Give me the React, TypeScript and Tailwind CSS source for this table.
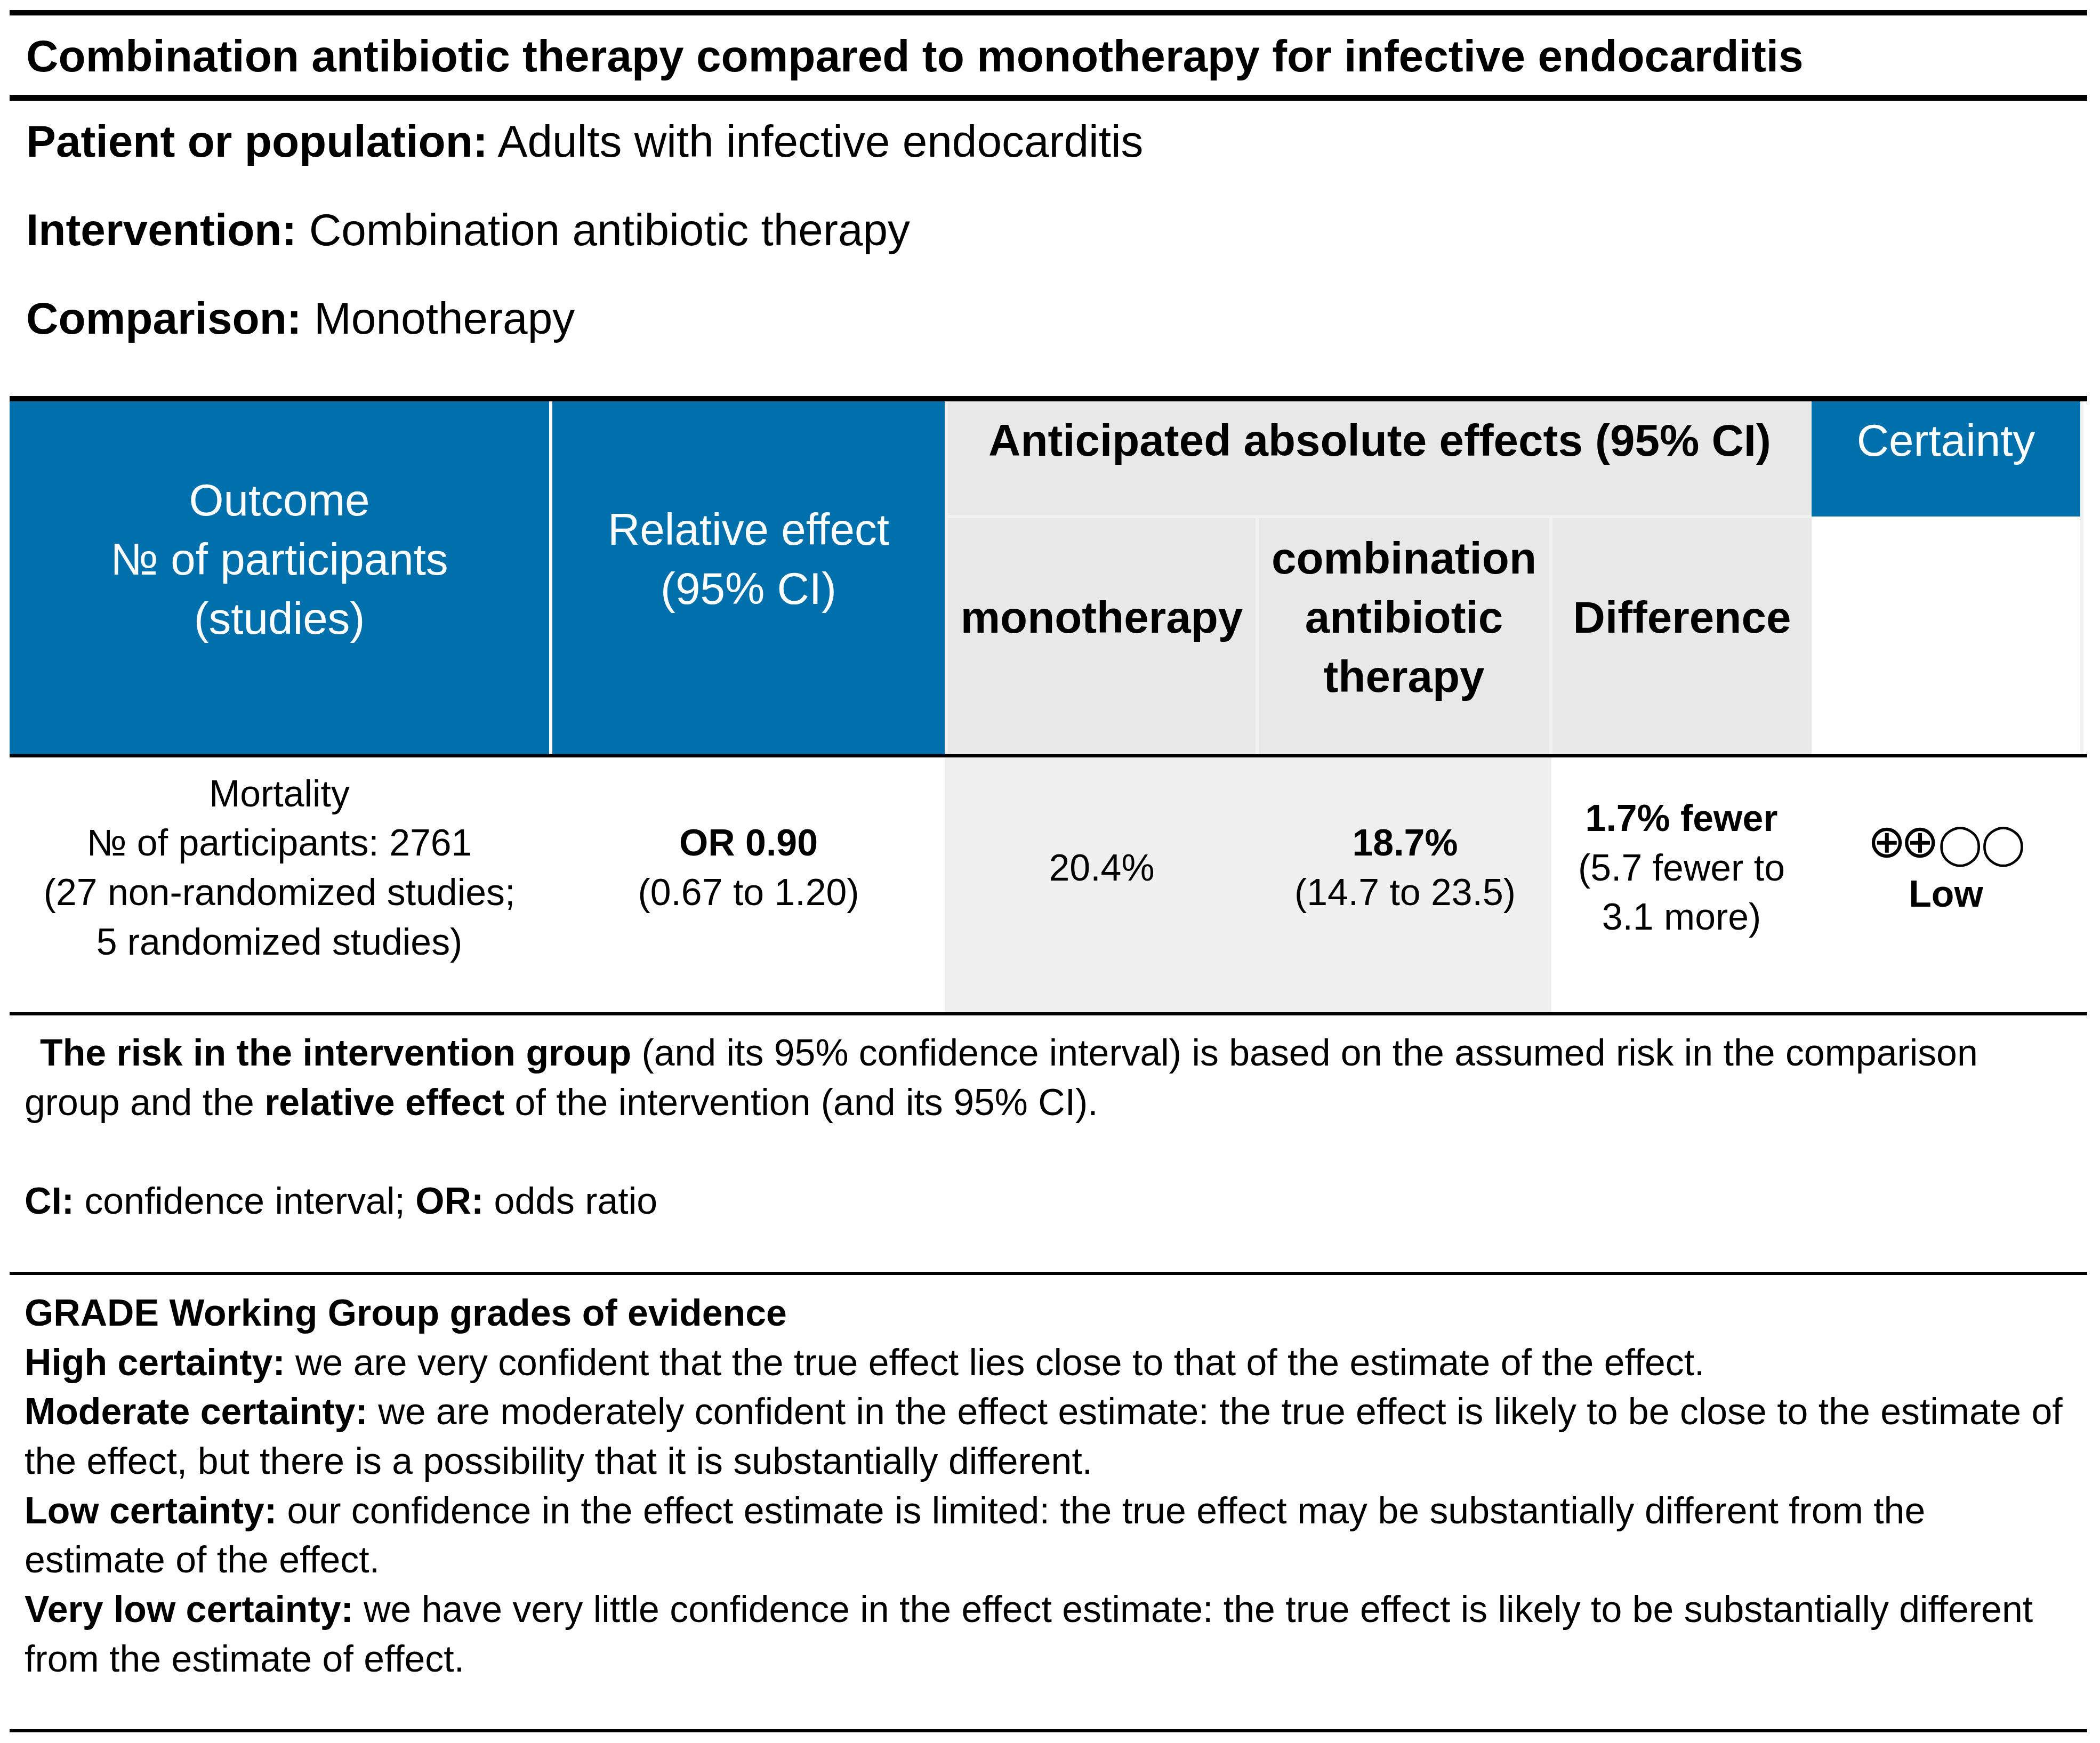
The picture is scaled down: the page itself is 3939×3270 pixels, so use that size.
export default function App() {
  return (
    <div className="min-h-screen w-[3939px] bg-white font-['Liberation_Sans','DejaVu_Sans',sans-serif] text-black">
      <div className="ml-[18px] w-[3897px] pt-[19px]">
        {/* title */}
        <div className="border-y-[10px] border-b-[11px] border-black pb-[17px] pl-[31px] pt-[21px] text-[83.8px] font-bold leading-[111px] whitespace-nowrap">
          Combination antibiotic therapy compared to monotherapy for infective endocarditis
        </div>

        {/* PICO */}
        <div className="flex flex-col gap-[55px] pb-[90px] pl-[31px] pt-[21px] text-[83.8px] leading-[111px] whitespace-nowrap">
          <p>
            <strong>Patient or population:</strong> Adults with infective endocarditis
          </p>
          <p>
            <strong>Intervention:</strong> Combination antibiotic therapy
          </p>
          <p>
            <strong>Comparison:</strong> Monotherapy
          </p>
        </div>

        {/* table */}
        <div className="border-t-[10px] border-black">
          <div className="flex h-[662px] text-[83.6px] leading-[111px] whitespace-nowrap">
            <div className="flex w-[1012px] items-center justify-center bg-[#0070ad] pb-[70px] text-center text-white">
              <div>
                Outcome
                <br />
                № of participants
                <br />
                (studies)
              </div>
            </div>
            <div className="w-[6px] bg-white" />
            <div className="flex w-[736px] items-center justify-center bg-[#0070ad] pb-[70px] text-center text-white">
              <div>
                Relative effect
                <br />
                (95% CI)
              </div>
            </div>
            <div className="w-[6px] bg-[#f2f2f2]" />
            <div className="flex w-[2124px] flex-col">
              <div className="flex h-[213px]">
                <div className="w-[1620px] bg-[#e8e8e8] pt-[18px] text-center font-bold">
                  Anticipated absolute effects (95% CI)
                </div>
                <div className="w-[504px] bg-[#0070ad] pt-[18px] text-center text-white">Certainty</div>
              </div>
              <div className="flex h-[6px]">
                <div className="w-[1620px] bg-[#f2f2f2]" />
                <div className="h-[3px] w-[504px] bg-[#0070ad]" />
              </div>
              <div className="flex flex-1 font-bold">
                <div className="flex w-[577px] items-center justify-center bg-[#e8e8e8] pb-[70px] text-center">
                  monotherapy
                </div>
                <div className="w-[6px] bg-[#f2f2f2]" />
                <div className="flex w-[545px] items-center justify-center bg-[#e8e8e8] pb-[70px] text-center">
                  <div>
                    combination
                    <br />
                    antibiotic
                    <br />
                    therapy
                  </div>
                </div>
                <div className="w-[6px] bg-[#f2f2f2]" />
                <div className="flex w-[486px] items-center justify-center bg-[#e8e8e8] pb-[70px] text-center">
                  Difference
                </div>
                <div className="w-[504px] bg-white" />
              </div>
            </div>
            <div className="w-[6px] bg-[#f2f2f2]" />
          </div>

          <div className="flex h-[478px] border-y-[6px] border-black text-[69.8px] leading-[92.7px] whitespace-nowrap box-content">
            <div className="flex w-[1012px] items-center justify-center pb-[64px] text-center">
              <div>
                Mortality
                <br />
                № of participants: 2761
                <br />
                (27 non-randomized studies;
                <br />5 randomized studies)
              </div>
            </div>
            <div className="w-[6px]" />
            <div className="flex w-[736px] items-center justify-center pb-[64px] text-center">
              <div>
                <strong>OR 0.90</strong>
                <br />
                (0.67 to 1.20)
              </div>
            </div>
            <div className="flex w-[1138px] bg-[#f0f0f0]">
              <div className="flex w-[589px] items-center justify-center pb-[64px] text-center">20.4%</div>
              <div className="flex w-[549px] items-center justify-center pb-[64px] text-center">
                <div>
                  <strong>18.7%</strong>
                  <br />
                  (14.7 to 23.5)
                </div>
              </div>
            </div>
            <div className="flex w-[488px] items-center justify-center pb-[64px] text-center">
              <div>
                <strong>1.7% fewer</strong>
                <br />
                (5.7 fewer to
                <br />
                3.1 more)
              </div>
            </div>
            <div className="flex w-[504px] items-center justify-center pb-[64px] text-center">
              <div>
                <span className="font-['DejaVu_Sans',sans-serif]">
                  <span className="text-[86px] tracking-[-10px]">⊕⊕</span>
                  <span className="ml-[8px] text-[74px] tracking-[-2px]">◯◯</span>
                </span>
                <br />
                <strong>Low</strong>
              </div>
            </div>
          </div>
        </div>

        {/* footnotes */}
        <div className="border-b-[6px] border-black pb-[86px] pl-[28px] pt-[24px] text-[69.8px] leading-[92.7px] whitespace-nowrap">
          <p>
            <strong className="ml-[29px]">The risk in the intervention group</strong> (and its 95% confidence interval) is
            based on the assumed risk in the comparison
            <br />
            group and the <strong>relative effect</strong> of the intervention (and its 95% CI).
          </p>
          <p className="mt-[92.7px]">
            <strong>CI:</strong> confidence interval; <strong>OR:</strong> odds ratio
          </p>
        </div>

        <div className="border-b-[6px] border-black pb-[86px] pl-[28px] pt-[25px] text-[69.8px] leading-[92.7px] whitespace-nowrap">
          <p>
            <strong>GRADE Working Group grades of evidence</strong>
          </p>
          <p>
            <strong>High certainty:</strong> we are very confident that the true effect lies close to that of the estimate
            of the effect.
          </p>
          <p>
            <strong>Moderate certainty:</strong> we are moderately confident in the effect estimate: the true effect is
            likely to be close to the estimate of
            <br />
            the effect, but there is a possibility that it is substantially different.
          </p>
          <p>
            <strong>Low certainty:</strong> our confidence in the effect estimate is limited: the true effect may be
            substantially different from the
            <br />
            estimate of the effect.
          </p>
          <p>
            <strong>Very low certainty:</strong> we have very little confidence in the effect estimate: the true effect is
            likely to be substantially different
            <br />
            from the estimate of effect.
          </p>
        </div>
      </div>
    </div>
  )
}
